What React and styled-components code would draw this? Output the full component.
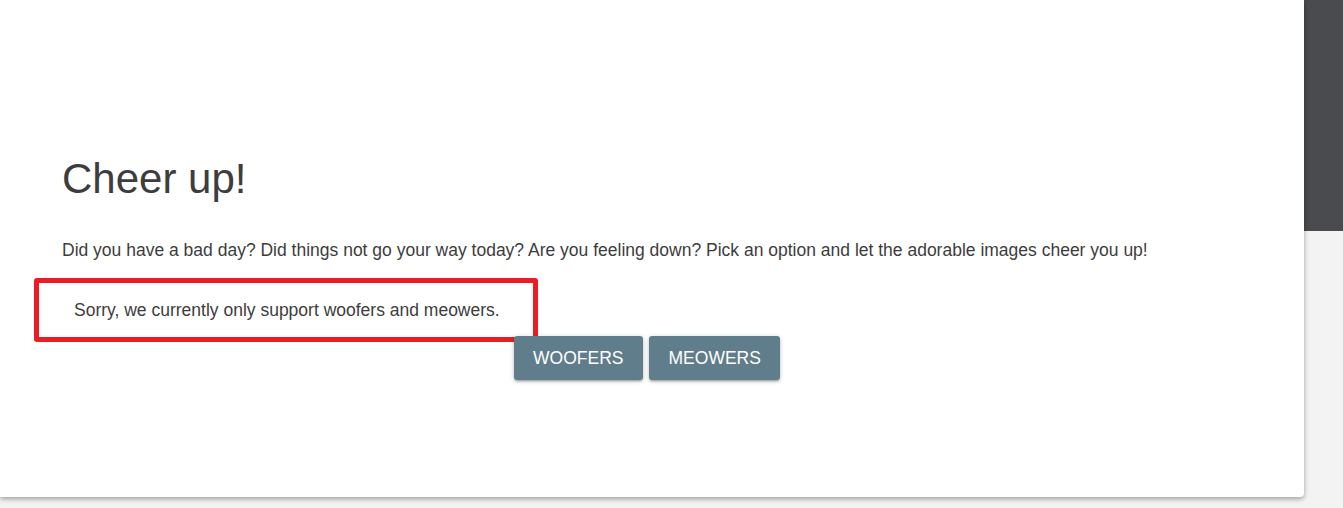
import React from 'react';
import styled, { createGlobalStyle } from 'styled-components';

const GlobalStyle = createGlobalStyle`
    html, body {
        margin:0;
        padding:0;
        background:#f3f3f3;
    }
    body{
        font-family:"Liberation Sans", Arial, sans-serif;
        color:#444;
    }
`;

const App = () => {
    const options = ['woofers', 'meowers'];
    return (
        <>
            <GlobalStyle />
            <Page>
                <Card>
                    <Title>Cheer up!</Title>
                    <Intro>
                        Did you have a bad day? Did things not go your way today? Are you feeling down? Pick an option and let the adorable images cheer you up!
                    </Intro>
                    <Notice>Sorry, we currently only support woofers and meowers.</Notice>
                    <ButtonRow>
                        {options.map((opt) => (
                            <Button key={opt}>{opt}</Button>
                        ))}
                    </ButtonRow>
                </Card>
                <Side>
                    <SideBlock />
                </Side>
            </Page>
        </>
    );
};

const Page = styled.div`
    display:flex;
    align-items:flex-start;
    min-height:508px;
    background:#f3f3f3;
`;

const Card = styled.div`
    position:relative;
    z-index:1;
    box-sizing:border-box;
    width:1304px;
    height:497px;
    padding:156px 62px 0;
    background:white;
    border-bottom-right-radius:4px;
    box-shadow:0 2px 5px rgba(0,0,0,.35);
`;

const Side = styled.div`
    flex:1;
`;

const SideBlock = styled.div`
    height:231px;
    background:#4a4b4f;
`;

const Title = styled.h1`
    margin:0;
    font-size:42px;
    line-height:46px;
    font-weight:400;
    color:#3d3d3d;
`;

const Intro = styled.p`
    margin:36px 0 0;
    font-size:17.5px;
    line-height:24px;
    color:#3d3d3d;
`;

const Notice = styled.div`
    box-sizing:border-box;
    width:504px;
    margin:16px 0 -6px -28px;
    padding:15px 0 15px 35px;
    border:5px solid #ed1c24;
    border-radius:3px;
    font-size:17.5px;
    line-height:24px;
    color:#3d3d3d;
`;

const ButtonRow = styled.div`
    display:flex;
    justify-content:center;
    gap:6px;
    padding-right:10px;
`;

const Button = styled.button`
    height:44px;
    padding:0 19.5px;
    border:none;
    border-radius:3px;
    background:#607d8b;
    color:white;
    font-family:"Liberation Sans", Arial, sans-serif;
    font-size:17.5px;
    text-transform:uppercase;
    box-shadow:0 2px 2px 0 rgba(0,0,0,.14), 0 3px 1px -2px rgba(0,0,0,.12), 0 1px 5px 0 rgba(0,0,0,.2);
    cursor:pointer;
`;

export default App;
